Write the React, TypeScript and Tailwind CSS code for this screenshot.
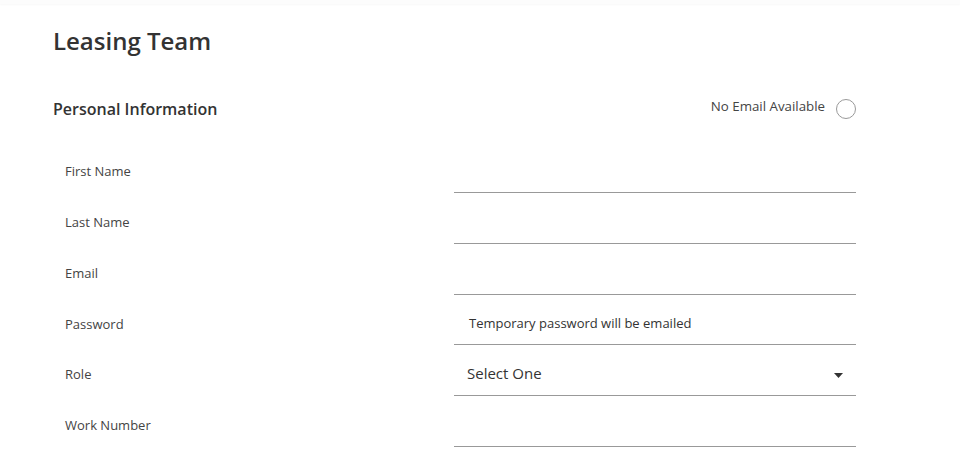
const rows = [
  { label: 'First Name' },
  { label: 'Last Name' },
  { label: 'Email' },
  { label: 'Password', text: 'Temporary password will be emailed' },
  { label: 'Role', select: 'Select One' },
  { label: 'Work Number' },
]

export default function App() {
  return (
    <div className="min-h-[476px] bg-white font-['Open_Sans',sans-serif] text-[#333]">
      <div className="h-[4px] bg-[#fcfcfc] shadow-[0_1px_2px_rgba(0,0,0,0.03)]"></div>

      <main className="pl-[53px] w-[856px]">
        {/* Title */}
        <h1 className="mt-[22px] text-[24px] leading-[30px] font-semibold text-[#333]">Leasing Team</h1>

        {/* Section header */}
        <div className="mt-[41px] flex items-center justify-between h-[24px]">
          <h2 className="text-[16px] font-semibold text-[#333]">Personal Information</h2>
          <label className="flex items-center">
            <span className="text-[13.3px] text-[#444] -mt-[4px]">No Email Available</span>
            <span className="ml-[11px] w-[20px] h-[20px] rounded-full border border-[#999] bg-white"></span>
          </label>
        </div>

        {/* Fields */}
        <div className="mt-[30px]">
          {rows.map((row) => (
            <div key={row.label} className="flex items-center mb-[8.8px]">
              <div className="w-[401px] pl-[12px] text-[13px] text-[#444]">{row.label}</div>
              <div className="flex-1 h-[42px] border-b border-[#999] flex items-center">
                {row.text && <span className="pl-[15px] text-[13px] text-[#333]">{row.text}</span>}
                {row.select && (
                  <div className="flex-1 flex items-center justify-between">
                    <span className="pl-[13px] text-[15px] text-[#333] -mt-[3px]">{row.select}</span>
                    <svg className="mr-[13px] mt-[2px]" width="9" height="5" viewBox="0 0 9 5">
                      <path d="M0 0 L9 0 L4.5 5 Z" fill="#333" />
                    </svg>
                  </div>
                )}
              </div>
            </div>
          ))}
        </div>
      </main>
    </div>
  )
}
